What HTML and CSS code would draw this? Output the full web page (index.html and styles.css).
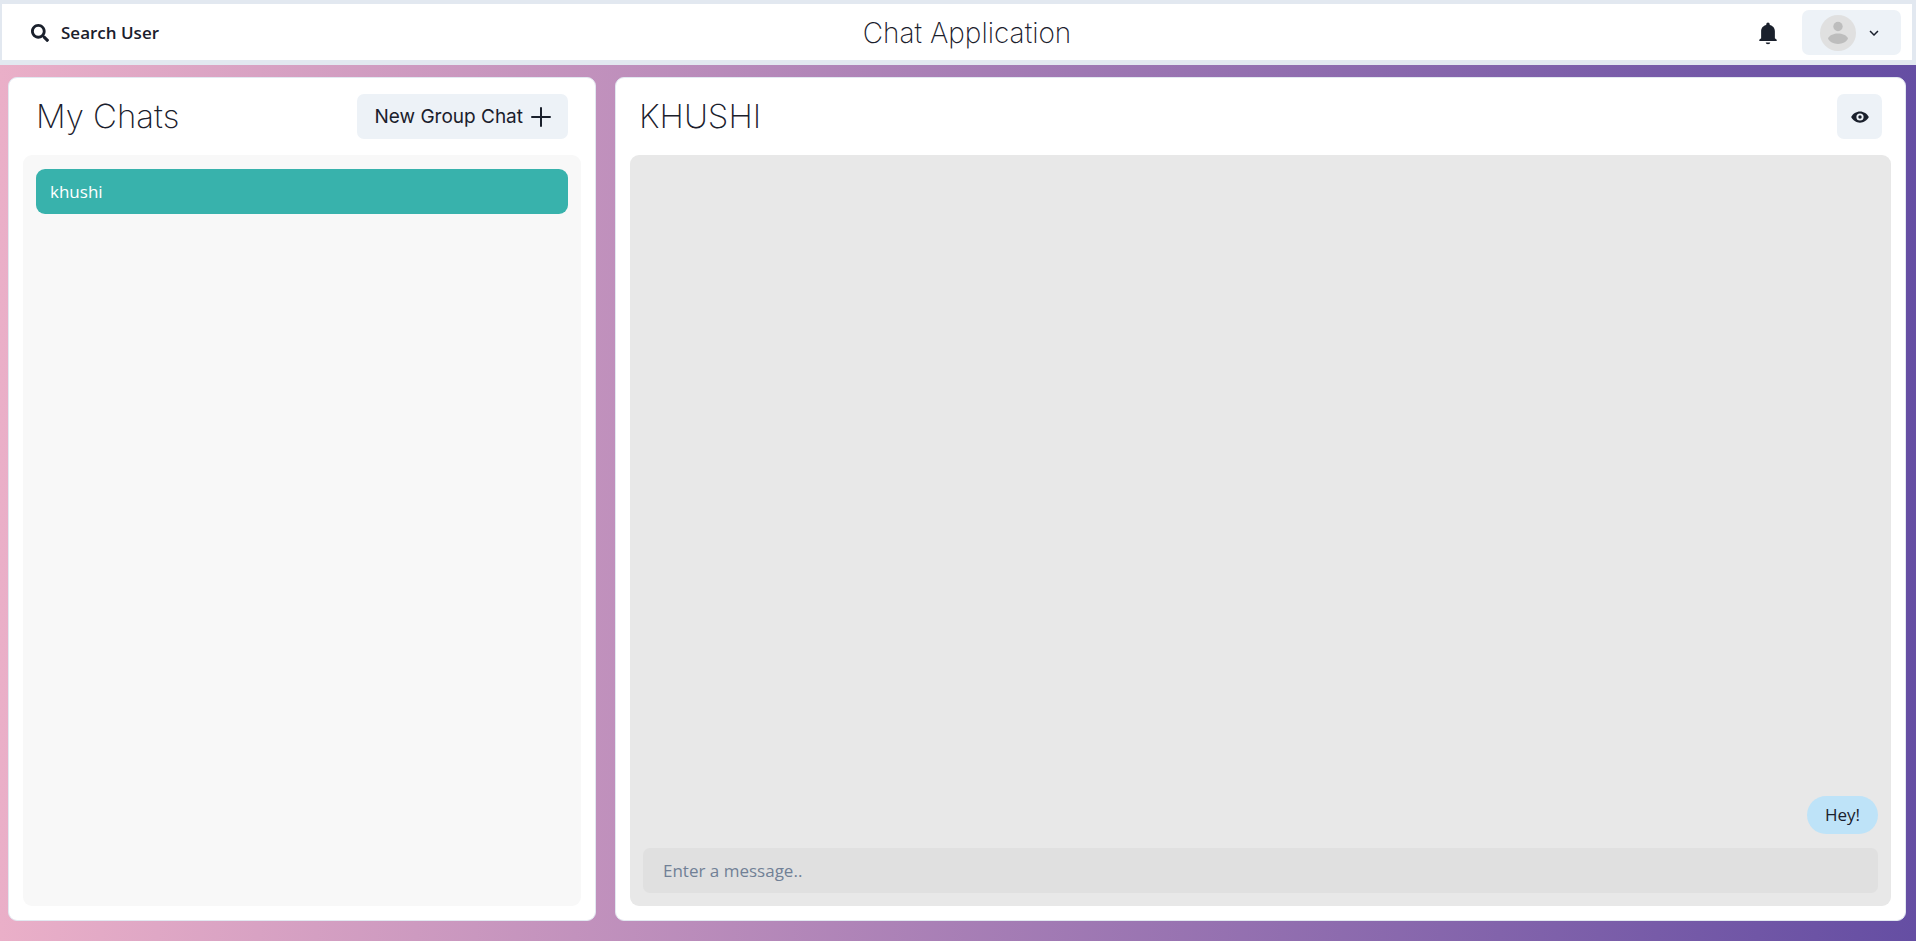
FILE: index.html
```html
<!DOCTYPE html>
<html lang="en">
<head>
<meta charset="utf-8">
<meta name="viewport" content="width=device-width, initial-scale=1">
<title>Chat Application</title>
<link rel="stylesheet" href="styles.css">
</head>
<body>
<div class="app">
  <header class="topbar">
    <button class="search-button" type="button">
      <svg class="icon-search" viewBox="0 0 512 512" aria-hidden="true"><path fill="currentColor" d="M505 442.700L405.300 343c-4.500-4.500-10.600-7-17-7H372c27.600-35.300 44-79.700 44-128C416 93.100 322.900 0 208 0S0 93.100 0 208s93.100 208 208 208c48.300 0 92.700-16.400 128-44v16.300c0 6.400 2.500 12.500 7 17l99.700 99.700c9.400 9.400 24.600 9.400 33.900 0l28.300-28.300c9.400-9.400 9.400-24.600.1-34zM208 336c-70.700 0-128-57.200-128-128 0-70.700 57.200-128 128-128 70.700 0 128 57.200 128 128 0 70.700-57.200 128-128 128z"/></svg>
      <span>Search User</span>
    </button>
    <h1 class="brand">Chat Application</h1>
    <div class="topbar-end">
      <button class="bell-button" type="button" aria-label="Notifications">
        <svg class="icon-bell" viewBox="0 0 24 24" aria-hidden="true"><path fill="currentColor" d="M9.500 22.300h5a2.500 1.900 0 0 1-5 0zM21.500 19.400v1.300h-19v-1.300l2-1.800V10c0-3.500 2.400-6 5.600-6.700V2.500a1.900 1.900 0 0 1 3.800 0v.8c3.200.7 5.600 3.200 5.600 6.700v7.600z"/></svg>
      </button>
      <button class="profile-button" type="button" aria-label="Account menu">
        <svg class="avatar" viewBox="0 0 36 36" aria-hidden="true"><circle cx="18" cy="18" r="18" fill="#e0e0e0"/><circle cx="18" cy="11.500" r="4.700" fill="#bdbdbd"/><path fill="#bdbdbd" d="M8 23.600C9.500 20 14 18.600 18 18.600s8.500 1.400 10 5C26.500 27 22.500 29 18 29s-8.500-2-10-5.400z"/></svg>
        <svg class="icon-chevron" viewBox="0 0 24 24" aria-hidden="true"><path fill="currentColor" d="M16.590 8.590L12 13.170 7.410 8.590 6 10l6 6 6-6z"/></svg>
      </button>
    </div>
  </header>

  <main class="panels">
    <section class="card chats" aria-labelledby="chats-title">
      <div class="card-head">
        <h2 class="title" id="chats-title">My Chats</h2>
        <button class="button group-button" type="button">
          <span>New Group Chat</span>
          <svg class="icon-plus" viewBox="0 0 20 20" aria-hidden="true"><path stroke="currentColor" stroke-width="2" stroke-linecap="round" d="M10 1v18M1 10h18"/></svg>
        </button>
      </div>
      <div class="chat-list">
        <button class="chat-item" type="button">khushi</button>
      </div>
    </section>

    <section class="card conversation" aria-labelledby="peer-name">
      <div class="card-head">
        <h2 class="title" id="peer-name">KHUSHI</h2>
        <button class="button icon-button" type="button" aria-label="View profile">
          <svg class="icon-eye" viewBox="0 0 24 24" aria-hidden="true"><path fill="currentColor" fill-rule="evenodd" d="M12 4.500C7 4.500 2.500 7.500.2 12 2.500 16.500 7 19.500 12 19.500s9.500-3 11.800-7.500C21.500 7.500 17 4.500 12 4.500zm0 12.300a4.800 4.800 0 1 1 0-9.600 4.800 4.800 0 0 1 0 9.600z"/><circle cx="12" cy="12" r="2.300" fill="currentColor"/></svg>
        </button>
      </div>
      <div class="thread">
        <div class="messages">
          <p class="bubble">Hey!</p>
        </div>
        <form class="composer">
          <input class="message-input" type="text" placeholder="Enter a message.." aria-label="Enter a message">
        </form>
      </div>
    </section>
  </main>
</div>
</body>
</html>
```
FILE: styles.css
```css
*,
*::before,
*::after {
  box-sizing: border-box;
}

body {
  margin: 0;
  color: #1a202c;
  font: 17px/27px "Open Sans", "Noto Sans", sans-serif;
}

h1,
h2,
p {
  margin: 0;
}

button,
input {
  border: 0;
  padding: 0;
  background: none;
  color: inherit;
  font: inherit;
}

svg {
  display: block;
  flex: none;
}

.app {
  display: flex;
  flex-direction: column;
  min-height: 100vh;
  background: linear-gradient(to left, #654ea3, #eaafc8);
}

.topbar {
  display: flex;
  align-items: center;
  justify-content: space-between;
  padding: 6px 11px 5px;
  border: solid #e2e8f0;
  border-width: 4px 4px 5px 2px;
  background: #fff;
}

.topbar-end {
  display: flex;
  align-items: center;
}

.search-button {
  display: flex;
  align-items: center;
  gap: 12px;
  height: 44px;
  padding: 0 18px;
  font-weight: 600;
}

.icon-search {
  width: 18px;
  height: 18px;
}

.brand {
  font: 200 28px/40px Inter, sans-serif;
}

.bell-button {
  margin-right: 23px;
}

.icon-bell {
  width: 22px;
  height: 24px;
}

.profile-button {
  display: flex;
  align-items: center;
  gap: 9px;
  height: 45px;
  padding: 0 18px;
  border-radius: 7px;
  background: #edf2f7;
}

.avatar {
  width: 36px;
  height: 36px;
}

.icon-chevron {
  width: 18px;
  height: 18px;
}

.panels {
  display: grid;
  flex: 1;
  grid-template-columns: 588fr 1291fr;
  gap: 19px;
  padding: 12px 10px 20px 8px;
}

.card {
  display: flex;
  flex-direction: column;
  min-width: 0;
  padding: 16px 14px 14px;
  border: 1px solid #e2e8f0;
  border-radius: 9px;
  background: #fff;
}

.card-head {
  display: flex;
  align-items: center;
  justify-content: space-between;
  padding: 0 13px 16px;
}

.conversation .card-head {
  padding: 0 9px 16px;
}

.title {
  font: 200 33px/45px Inter, sans-serif;
}

.button {
  display: flex;
  align-items: center;
  justify-content: center;
  height: 45px;
  border-radius: 7px;
  background: #edf2f7;
}

.group-button {
  gap: 8px;
  padding: 0 17px;
  font-family: Inter, sans-serif;
  font-size: 19px;
}

.icon-plus {
  width: 20px;
  height: 20px;
}

.icon-button {
  width: 45px;
}

.icon-eye {
  width: 18px;
  height: 18px;
}

.chat-list {
  flex: 1;
  padding: 14px 13px;
  border-radius: 9px;
  background: #f8f8f8;
}

.chat-item {
  width: 100%;
  height: 45px;
  padding: 0 14px;
  border-radius: 9px;
  background: #38b2ac;
  color: #fff;
  text-align: left;
}

.thread {
  display: flex;
  flex: 1;
  flex-direction: column;
  gap: 14px;
  padding: 13px;
  border-radius: 9px;
  background: #e8e8e8;
}

.messages {
  display: flex;
  flex: 1;
  flex-direction: column;
  align-items: flex-end;
  justify-content: flex-end;
}

.bubble {
  padding: 5px 18px 6px;
  border-radius: 20px;
  background: #bee3f8;
}

.message-input {
  display: block;
  width: 100%;
  height: 45px;
  padding: 0 20px;
  border-radius: 7px;
  background: #e0e0e0;
}

.message-input::placeholder {
  color: #718096;
  opacity: 1;
}
```
